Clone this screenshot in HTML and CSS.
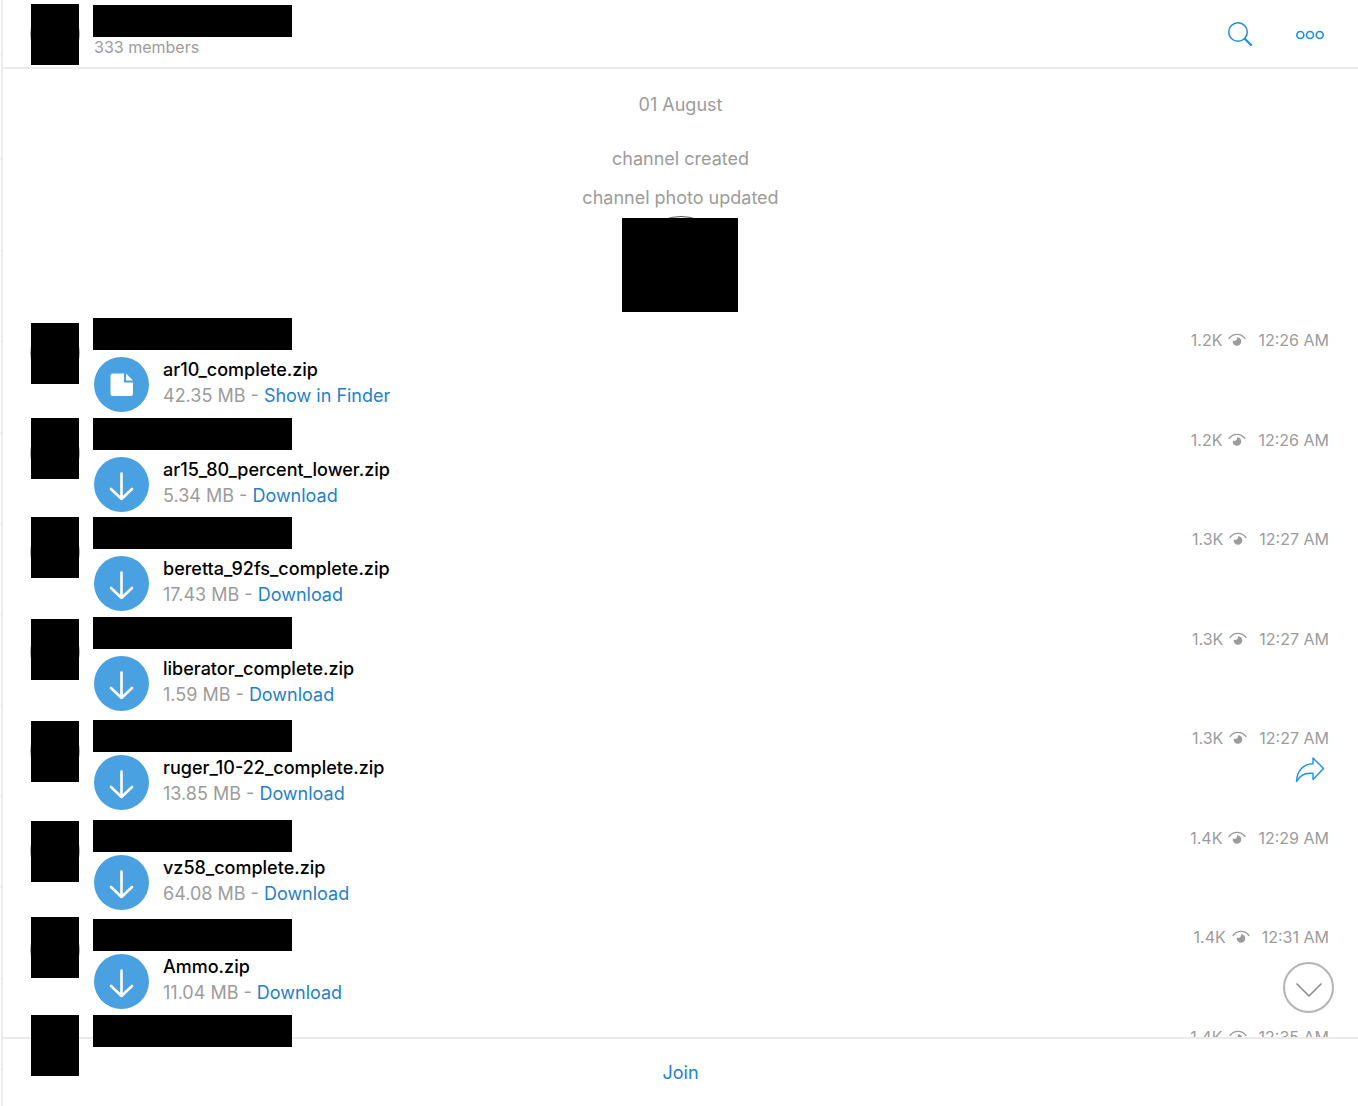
FILE: index.html
```html
<!DOCTYPE html>
<html lang="en">
<head>
  <meta charset="utf-8">
  <title>Channel</title>
  <link rel="stylesheet" href="styles.css">
</head>
<body>
<svg class="sprite" aria-hidden="true">
  <symbol id="eye" viewBox="0 0 18 14">
    <path d="M1 5.500C5 0 13 0 17 5.500" fill="none" stroke="currentColor" stroke-width="1.300" stroke-linecap="round"/>
    <path d="M9 4.200A4.300 4.300 0 1 1 4.800 7.600A2.900 2.900 0 0 0 9 4.200Z" fill="currentColor"/>
  </symbol>
  <symbol id="down" viewBox="0 0 55 55">
    <path d="M27.500 16.500V42M17 32L27.500 42L38 32" fill="none" stroke="currentColor" stroke-width="2.600" stroke-linecap="round" stroke-linejoin="round"/>
  </symbol>
  <symbol id="doc" viewBox="0 0 55 55">
    <path d="M19 16.500H30V25.500H39V36.500Q39 39 36.500 39H19Q16.500 39 16.500 36.500V19Q16.500 16.500 19 16.500Z" fill="currentColor"/>
    <path d="M32 16.500L39 23.500H32Z" fill="currentColor"/>
  </symbol>
</svg>
<div class="app">
  <aside class="rail"></aside>
  <div class="channel">
    <header class="header">
      <div class="avatar"><span class="mask mask-avatar"></span></div>
      <div class="title">
        <span class="mask mask-name"></span>
        <p class="members">333 members</p>
      </div>
      <button class="icon-btn" aria-label="Search">
        <svg width="28" height="28" viewBox="0 0 28 28" fill="none" stroke="currentColor" stroke-linecap="round">
          <circle cx="12" cy="12" r="9.300" stroke-width="1.500"/>
          <path d="M18.800 18.800L25 25" stroke-width="2.200"/>
        </svg>
      </button>
      <button class="icon-btn" aria-label="More">
        <svg width="28" height="28" viewBox="0 0 28 28" fill="none" stroke="currentColor" stroke-width="1.600">
          <circle cx="4.300" cy="15" r="3.500"/>
          <circle cx="14" cy="15" r="3.500"/>
          <circle cx="23.700" cy="15" r="3.500"/>
        </svg>
      </button>
    </header>

    <main class="chat">
      <p class="event date">01 August</p>
      <p class="event">channel created</p>
      <p class="event">channel photo updated</p>
      <div class="photo"><span class="mask mask-photo"></span></div>

      <ul class="messages">
        <li class="message name-high avatar-low">
          <div class="avatar"><span class="mask mask-avatar"></span></div>
          <div class="body">
            <span class="mask mask-name"></span>
            <svg class="file-icon"><use href="#doc"/></svg>
            <div class="file">
              <p class="file-name">ar10_complete.zip</p>
              <p class="file-size">42.35 MB - <a href="#">Show in Finder</a></p>
            </div>
          </div>
          <div class="meta"><span>1.2K</span><svg class="eye"><use href="#eye"/></svg><time>12:26 AM</time></div>
        </li>
        <li class="message name-high avatar-high">
          <div class="avatar"><span class="mask mask-avatar"></span></div>
          <div class="body">
            <span class="mask mask-name"></span>
            <svg class="file-icon"><use href="#down"/></svg>
            <div class="file">
              <p class="file-name">ar15_80_percent_lower.zip</p>
              <p class="file-size">5.34 MB - <a href="#">Download</a></p>
            </div>
          </div>
          <div class="meta"><span>1.2K</span><svg class="eye"><use href="#eye"/></svg><time>12:26 AM</time></div>
        </li>
        <li class="message name-high avatar-high">
          <div class="avatar"><span class="mask mask-avatar"></span></div>
          <div class="body">
            <span class="mask mask-name"></span>
            <svg class="file-icon"><use href="#down"/></svg>
            <div class="file">
              <p class="file-name">beretta_92fs_complete.zip</p>
              <p class="file-size">17.43 MB - <a href="#">Download</a></p>
            </div>
          </div>
          <div class="meta"><span>1.3K</span><svg class="eye"><use href="#eye"/></svg><time>12:27 AM</time></div>
        </li>
        <li class="message name-high">
          <div class="avatar"><span class="mask mask-avatar"></span></div>
          <div class="body">
            <span class="mask mask-name"></span>
            <svg class="file-icon"><use href="#down"/></svg>
            <div class="file">
              <p class="file-name">liberator_complete.zip</p>
              <p class="file-size">1.59 MB - <a href="#">Download</a></p>
            </div>
          </div>
          <div class="meta"><span>1.3K</span><svg class="eye"><use href="#eye"/></svg><time>12:27 AM</time></div>
        </li>
        <li class="message avatar-low">
          <div class="avatar"><span class="mask mask-avatar"></span></div>
          <div class="body">
            <span class="mask mask-name"></span>
            <svg class="file-icon"><use href="#down"/></svg>
            <div class="file">
              <p class="file-name">ruger_10-22_complete.zip</p>
              <p class="file-size">13.85 MB - <a href="#">Download</a></p>
            </div>
          </div>
          <div class="meta"><span>1.3K</span><svg class="eye"><use href="#eye"/></svg><time>12:27 AM</time>
            <button class="share" aria-label="Share">
              <svg width="30" height="26" viewBox="0 0 30 26" fill="none" stroke="currentColor" stroke-width="1.400" stroke-linejoin="round">
                <path d="M18 1L28.500 11.500L18 22.500V16.500C10 15.500 5 18 1.500 24.500C2 14 8 7 18 6.800Z"/>
              </svg>
            </button>
          </div>
        </li>
        <li class="message avatar-low">
          <div class="avatar"><span class="mask mask-avatar"></span></div>
          <div class="body">
            <span class="mask mask-name"></span>
            <svg class="file-icon"><use href="#down"/></svg>
            <div class="file">
              <p class="file-name">vz58_complete.zip</p>
              <p class="file-size">64.08 MB - <a href="#">Download</a></p>
            </div>
          </div>
          <div class="meta"><span>1.4K</span><svg class="eye"><use href="#eye"/></svg><time>12:29 AM</time></div>
        </li>
        <li class="message">
          <div class="avatar"><span class="mask mask-avatar"></span></div>
          <div class="body">
            <span class="mask mask-name"></span>
            <svg class="file-icon"><use href="#down"/></svg>
            <div class="file">
              <p class="file-name">Ammo.zip</p>
              <p class="file-size">11.04 MB - <a href="#">Download</a></p>
            </div>
          </div>
          <div class="meta"><span>1.4K</span><svg class="eye"><use href="#eye"/></svg><time>12:31 AM</time></div>
        </li>
        <li class="message name-high avatar-high">
          <div class="avatar"><span class="mask mask-avatar"></span></div>
          <div class="body"><span class="mask mask-name"></span></div>
          <div class="meta"><span>1.4K</span><svg class="eye"><use href="#eye"/></svg><time>12:35 AM</time></div>
        </li>
      </ul>

      <button class="to-bottom" aria-label="Scroll to bottom">
        <svg width="28" height="16" viewBox="0 0 28 16" fill="none" stroke="currentColor" stroke-width="1.500">
          <path d="M1.500 1.500L14 14L26.500 1.500"/>
        </svg>
      </button>
    </main>

    <footer class="footer">
      <button class="join">Join</button>
    </footer>
  </div>
</div>
</body>
</html>
```
FILE: styles.css
```css
* {
  box-sizing: border-box;
}
body {
  margin: 0;
  background: #fff;
  color: #000;
  font-family: Inter, "Liberation Sans", sans-serif;
  font-size: 18px;
  line-height: 26px;
}
p, ul {
  margin: 0;
  padding: 0;
}
button {
  border: none;
  background: none;
  padding: 0;
  font: inherit;
  color: #1a8fe8;
  cursor: pointer;
}
a {
  color: #2481cc;
  text-decoration: none;
}
svg {
  display: block;
}
.sprite {
  position: absolute;
  width: 0;
  height: 0;
}
.app {
  display: flex;
  height: 100vh;
  overflow: hidden;
}
.rail {
  width: 3px;
  border-right: 2px solid #ededed;
  background: repeating-linear-gradient(#fff 0, #fff 90px, #ededed 90px, #ededed 91px) 0 69px;
}
.channel {
  flex: 1;
  min-width: 0;
  display: flex;
  flex-direction: column;
}

/* header */
.header {
  display: flex;
  align-items: center;
  gap: 14px;
  height: 69px;
  padding: 0 34px 0 27px;
  border-bottom: 2px solid #ebebeb;
}
.title {
  flex: 1;
  position: relative;
  height: 68px;
  padding-top: 34px;
}
.members {
  color: #9c9c9c;
  font-size: 16px;
}
.icon-btn + .icon-btn {
  margin-left: 28px;
}

/* avatars and the blocks that cover them */
.avatar {
  position: relative;
  flex: none;
  width: 50px;
  height: 50px;
  border: 1px solid #aaa;
  border-radius: 50%;
}
.mask {
  position: absolute;
  z-index: 2;
  background: #000;
}
.mask-avatar {
  top: -9px;
  left: 0;
  width: 48px;
  height: 61px;
}
.mask-name {
  top: 5px;
  left: -1px;
  width: 199px;
  height: 32px;
}
.avatar-high .mask-avatar {
  top: -11px;
}
.header .mask-avatar,
.avatar-low .mask-avatar {
  top: -6px;
}
.name-high .mask-name {
  top: 1px;
}

/* chat */
.chat {
  position: relative;
  flex: 1;
  min-height: 0;
}
.event {
  margin-top: 13px;
  color: #9c9c9c;
  text-align: center;
}
.event.date {
  margin: 23px 0 28px;
}
.photo {
  position: relative;
  width: 96px;
  height: 96px;
  margin: 5px auto;
  border: 1px solid #555;
  border-radius: 50%;
}
.mask-photo {
  top: 1px;
  left: -12px;
  width: 116px;
  height: 94px;
}
.messages {
  list-style: none;
}
.message {
  display: flex;
  align-items: flex-start;
  gap: 14px;
  height: 100px;
  padding: 0 29px 0 27px;
}
.message:nth-child(even) {
  height: 99px;
}
.message .avatar {
  margin-top: 11px;
}
.body {
  position: relative;
  flex: 1;
  display: flex;
  gap: 14px;
  padding-top: 40px;
}
.file-icon {
  flex: none;
  width: 55px;
  height: 55px;
  border-radius: 50%;
  background: #4aa1e2;
  color: #fff;
}
.file-name {
  font-weight: 500;
}
.file-size {
  color: #9c9c9c;
}
.meta {
  display: flex;
  flex-wrap: wrap;
  justify-content: flex-end;
  align-items: center;
  width: 150px;
  padding-top: 10px;
  color: #9c9c9c;
  font-size: 16px;
}
.eye {
  width: 18px;
  height: 14px;
  margin: 0 12px 0 6px;
}
.share {
  margin: 6px 4px 0 100px;
}
.to-bottom {
  position: absolute;
  right: 24px;
  bottom: 24px;
  display: flex;
  align-items: center;
  justify-content: center;
  width: 51px;
  height: 51px;
  padding-top: 4px;
  border: 2px solid #b4b4b4;
  border-radius: 50%;
  background: #fff;
  color: #888;
}

/* footer */
.footer {
  position: relative;
  z-index: 1;
  height: 69px;
  border-top: 2px solid #ebebeb;
  background: #fff;
}
.join {
  width: 100%;
  height: 67px;
  color: #2481cc;
}
```
